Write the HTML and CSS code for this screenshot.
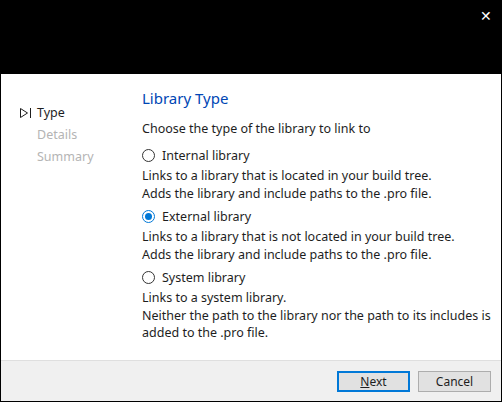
FILE: index.html
```html
<!DOCTYPE html>
<html lang="en">
<head>
<meta charset="UTF-8">
<title>Library Type</title>
<link rel="stylesheet" href="styles.css">
</head>
<body>

<div class="titlebar">
    <span class="close">&#x2715;</span>
</div>

<div class="dialog">
    <div class="content">
        <ul class="steps">
            <li class="current">
                <svg class="marker" width="13" height="12" viewBox="0 0 13 12">
                    <polygon points="1.5,1.5 8.5,6 1.5,10.5" fill="none" stroke="#1e1e1e" stroke-width="1"/>
                    <line x1="11.5" y1="1" x2="11.5" y2="11" stroke="#1e1e1e" stroke-width="1"/>
                </svg>Type
            </li>
            <li>Details</li>
            <li>Summary</li>
        </ul>
        <div class="page">
            <h2>Library Type</h2>
            <p class="intro">Choose the type of the library to link to</p>

            <label class="option"><span class="radio"></span>Internal library</label>
            <p class="desc">Links to a library that is located in your build tree.<br>Adds the library and include paths to the .pro file.</p>

            <label class="option"><span class="radio checked"></span>External library</label>
            <p class="desc">Links to a library that is not located in your build tree.<br>Adds the library and include paths to the .pro file.</p>

            <label class="option"><span class="radio"></span>System library</label>
            <p class="desc">Links to a system library.<br>Neither the path to the library nor the path to its includes is added to the .pro file.</p>
        </div>
    </div>
    <div class="footer">
        <button class="btn default"><u>N</u>ext</button>
        <button class="btn">Cancel</button>
    </div>
</div>

</body>
</html>
```

FILE: styles.css
```css
body {
    margin: 0;
    padding: 0;
    background-color: #000;
    font-family: "Noto Sans", "Open Sans", sans-serif;
    font-size: 12.5px;
    color: #1e1e1e;
    height: 402px;
    display: flex;
    flex-direction: column;
}
.titlebar {
    height: 74px;
    display: flex;
    justify-content: flex-end;
    align-items: flex-start;
}
.close {
    color: #fff;
    font-size: 14px;
    margin: 6px 10px 0 0;
}
.dialog {
    flex: 1;
    margin: 0 1px 1px 1px;
    background-color: #fff;
    display: flex;
    flex-direction: column;
}
.content {
    flex: 1;
    display: flex;
}
.steps {
    list-style: none;
    margin: 0;
    padding: 28px 0 0 18px;
    width: 122px;
    color: #b4b4b4;
}
.steps li {
    height: 22px;
    line-height: 22px;
    padding-left: 18px;
    position: relative;
}
.steps li.current {
    color: #1e1e1e;
}
.marker {
    position: absolute;
    left: 0;
    top: 5px;
}
.page {
    flex: 1;
    padding: 12px 6px 0 1px;
}
h2 {
    margin: 0 0 10px 0;
    font-size: 15px;
    font-weight: normal;
    color: #0046b4;
    line-height: 24px;
}
.intro {
    margin: 0 0 9px 0;
    line-height: 17px;
}
.option {
    display: flex;
    align-items: center;
    height: 18px;
    margin-bottom: 3px;
}
.radio {
    width: 11px;
    height: 11px;
    border: 1px solid #333;
    border-radius: 50%;
    margin-right: 7px;
    box-sizing: content-box;
    display: inline-block;
    position: relative;
}
.radio.checked {
    border-color: #0078d7;
}
.radio.checked::after {
    content: "";
    position: absolute;
    left: 2px;
    top: 2px;
    width: 7px;
    height: 7px;
    border-radius: 50%;
    background-color: #0078d7;
}
.desc {
    margin: 0 0 5px 0;
    line-height: 17.5px;
}
.footer {
    height: 40px;
    border-top: 1px solid #dfdfdf;
    background-color: #f0f0f0;
    display: flex;
    justify-content: flex-end;
    align-items: center;
    gap: 8px;
    padding-right: 10px;
}
.btn {
    width: 73px;
    height: 21px;
    font-family: inherit;
    font-size: 12px;
    color: #1e1e1e;
    background-color: #e1e1e1;
    border: 1px solid #adadad;
    padding: 0;
}
.btn.default {
    border: 2px solid #0078d7;
}
```
